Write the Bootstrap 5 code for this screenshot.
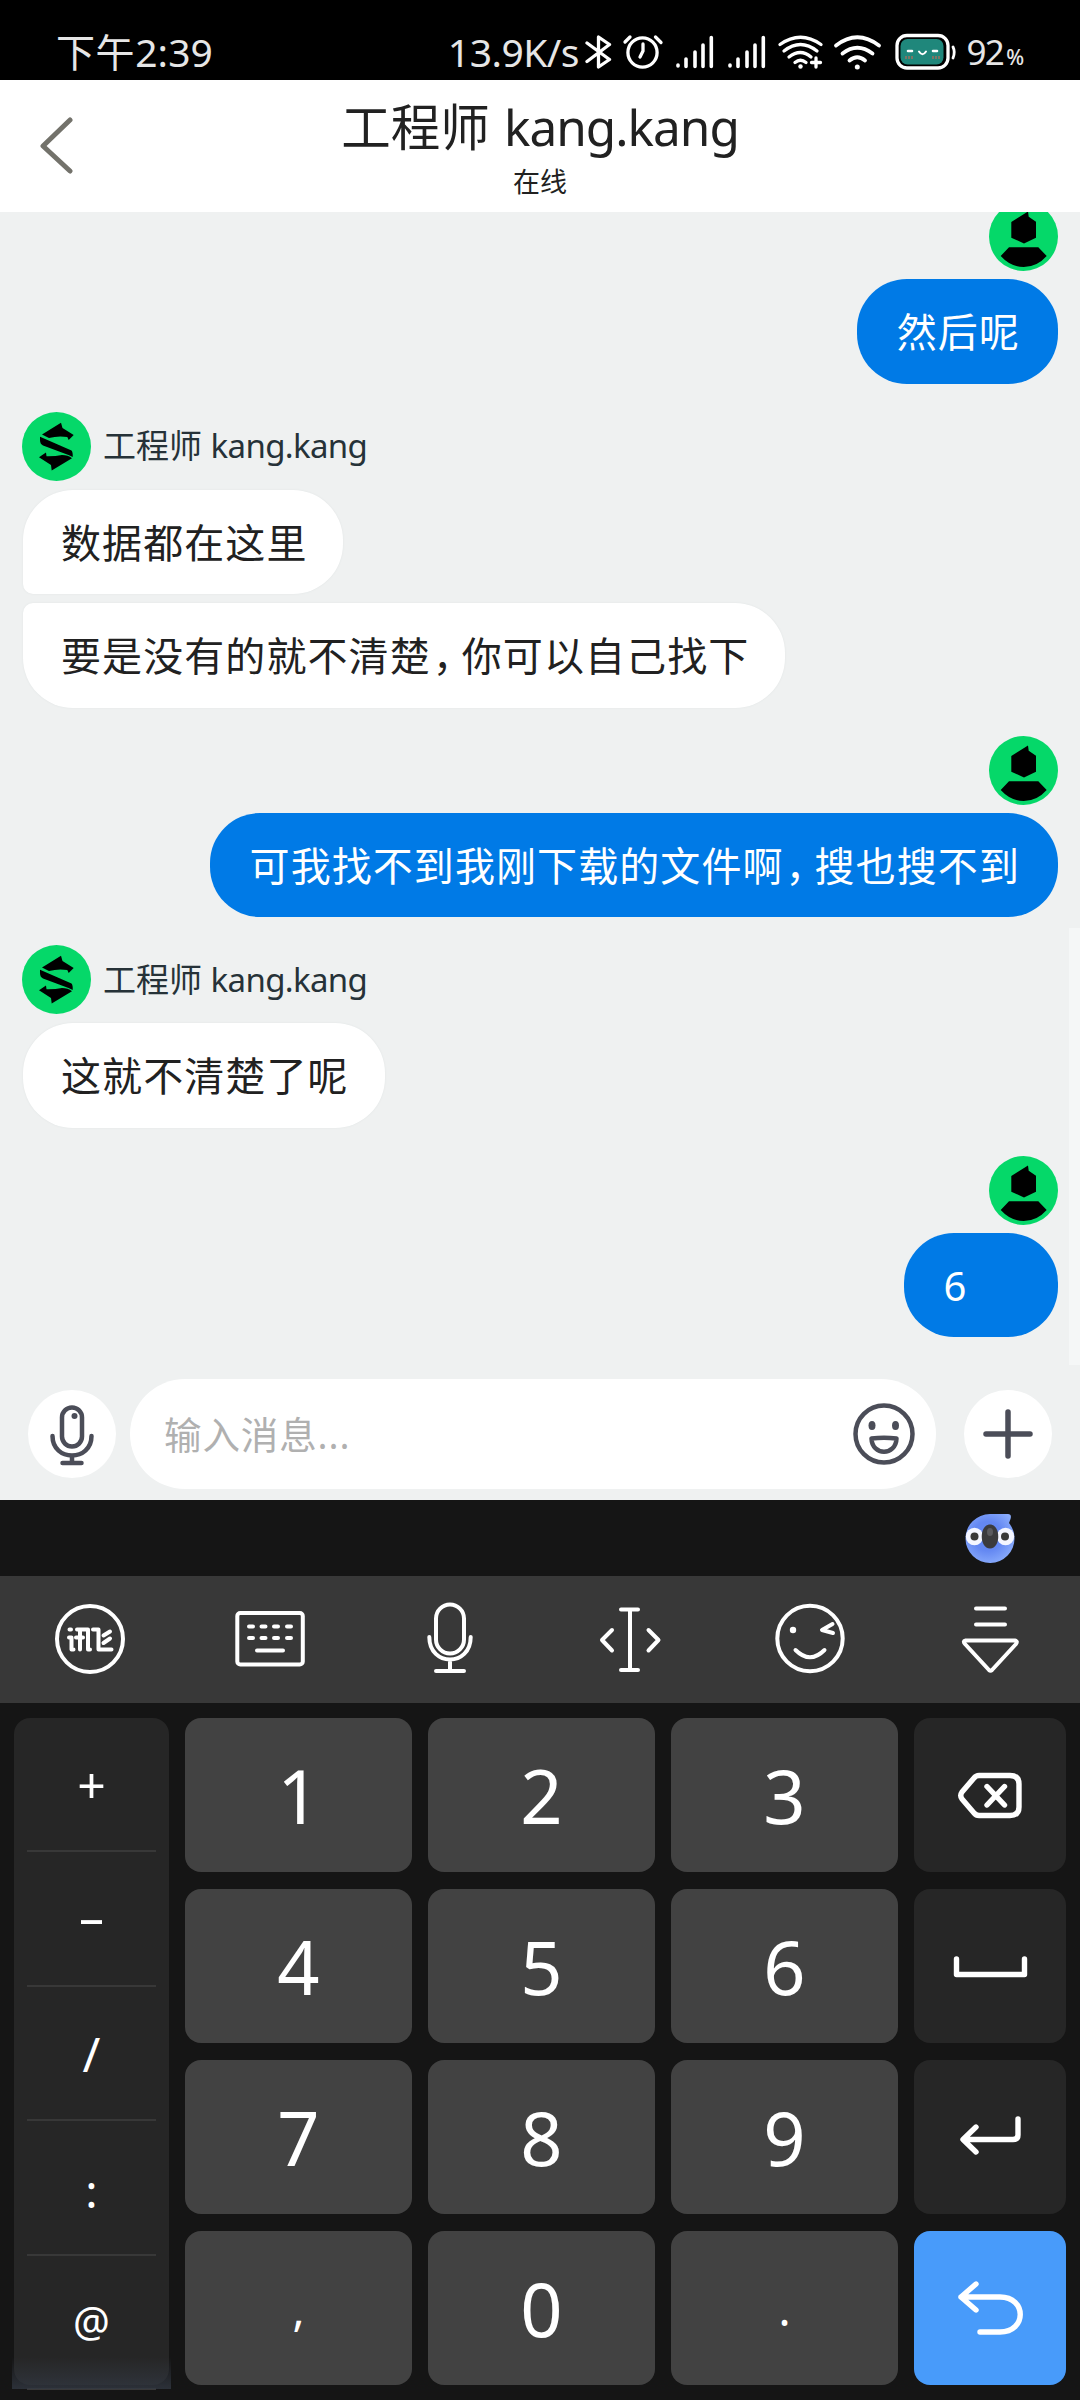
<!DOCTYPE html>
<html lang="zh-CN">
<head>
<meta charset="utf-8">
<meta name="viewport" content="width=device-width, initial-scale=1">
<title>工程师 kang.kang</title>
<link href="https://cdn.jsdelivr.net/npm/bootstrap@5.3.0/dist/css/bootstrap.min.css" rel="stylesheet">
<style>
body{width:1080px;height:2400px;overflow:hidden;font-family:"Noto Sans","Noto Sans CJK SC",sans-serif;color:#212121;background:#151515}
svg{display:block;flex:none}
.ln{fill:none;stroke:currentColor;stroke-linecap:round;stroke-linejoin:round}
.statusbar{height:80px;background:#000;color:#e6e6e6;padding:24px 54px 0 56px}
.statusbar .clock,.statusbar .rate{font-size:39px;line-height:56px;white-space:nowrap}
.clock{width:170px;letter-spacing:.1px}
.clock .cjk{letter-spacing:.6px}
.rate{letter-spacing:-.5px;width:138.5px;margin-left:223px}
.pct{font-size:35px;line-height:56px;letter-spacing:-1.6px;width:60px;white-space:nowrap}
.pct .unit{font-size:21px;font-weight:500;margin-left:3px}
.chat-head{height:132px;background:#fff;padding:0 40px}
.chat-head h1{font-size:49.5px;line-height:66px;margin:14px 0 0;font-weight:400;white-space:pre;word-spacing:1.5px}
.lat{letter-spacing:-.02em}
.chat-head p{font-size:27px;line-height:36px;margin:4px 0 0}
.chat-head .side{width:48px}
.chat-body{height:1288px;background:#eff1f1}
.thread{height:1167px;padding:0 22px;overflow:hidden}
.first{margin-top:-10px}
.turn{margin-bottom:28px}
.who{font-size:33px;color:#263238;margin-left:12px;line-height:60px;white-space:pre}
.bubble{height:104.5px;line-height:106px;font-size:40px;letter-spacing:1.08px;white-space:nowrap;border-radius:50px}
.bubble i{display:inline-block;width:31px;height:60px;line-height:60px;padding-left:2px;font-style:normal;font-feature-settings:"halt"}
.mine{background:#007ae6;color:#fff;margin-top:8px;padding:0 38px 0 39.5px}
.theirs{background:#fff;margin-top:9px;margin-left:1px;box-shadow:0 0 2px #dfe3e3;padding:0 36px 0 38px}
.tail-b{border-bottom-left-radius:10px}
.tail-t{border-top-left-radius:10px}
.short{width:154px}
.rail{width:11px;height:437px;top:716px;right:0;background:#f5f7f7}
.composer{padding:0 28px;height:110px}
.round-btn{width:88px;height:88px;background:#fff;color:#4b4d58;border:0;padding:0}
.field{width:806px;height:110px;background:#fff;border-radius:55px;padding:0 21px 0 34px;color:#b0b0b0;font-size:37.5px;letter-spacing:.9px;margin:0 28px 0 14px}
.field span{padding-top:2px}
.field svg{color:#4b4d58}
.suggest{height:76px;padding-right:65px}
.tools{height:127px;background:#383838;color:#fff;padding-top:1px}
.tools button,.pad button{border:0;padding:0;color:#fff}
.tools button{width:180px;height:124px;background:none}
.pad{padding:15px 14px 0 14px;gap:16px}
.syms{width:155px;height:667px;background:#262626;border-radius:16px}
.syms button{flex:none;height:134.5px;width:129px;background:none;border-bottom:2px solid #383838;font-size:41px;line-height:1}
.syms button:first-child{height:134px}
.syms button:last-child{border:0;height:129px}
.syms .op{font-size:50px}
.syms .minus{padding-bottom:5px}
.syms .slash{font-size:48px;padding-top:2px}
.syms .colon{font-size:46px;padding-top:6px}
.grid{display:grid;grid-template-columns:227px 227px 227px 151.5px;grid-auto-rows:154px;gap:17px 16px}
.key{background:#424242;border-radius:16px;font-size:74px;line-height:154px;display:flex;align-items:center;justify-content:center}
.key span{padding-top:2px}
.fn{background:#262626}
.key.go{background:#489bfa}
.key .pt{font-size:45px}
.glow{left:-2.5px;bottom:-4px;width:159px;height:32px;background:linear-gradient(#33394200,#323842cc)}
</style>
</head>
<body>
<svg width="0" height="0" class="position-absolute">
  <symbol id="av-me" viewBox="0 0 69 69"><circle cx="34.5" cy="34.5" r="34.5" fill="#05d869"/><path d="M39 9.5 39.7 14.7 47 19.7V35.7L35 41.5 22.3 35.7V20ZM20 45.3H49.3L57.7 54Q48 65 34.8 65T11.7 54Z"/></symbol>
  <symbol id="av-eng" viewBox="0 0 69 69"><circle cx="34.5" cy="34.5" r="34.5" fill="#05d869"/><path d="M39 10.7 40.5 16 51.7 23 46.7 28 45.3 25Q36 23.5 27 26L20 22.5ZM18 24.7 49.5 38.5Q51 40 50.7 45L46.5 43 21 33.5Q18 32 18 28ZM17 45.3 24 40.5 24.5 44.3Q33 44.5 40 43Q46 43 50 46.3L29.7 58.5 29 53Z"/></symbol>
</svg>

<header class="statusbar d-flex align-items-start">
  <div class="clock"><span class="cjk">下午</span>2:39</div>
  <div class="rate">13.9K/s</div>
  <svg width="381" height="56" viewBox="586 24 381 56" color="#fff">
    <g class="ln" stroke-width="3.3">
      <path d="M588 43 610.5 59.5 599.5 67V37L610.5 44.5 588 61.5"/>
      <circle cx="643.5" cy="52.5" r="14.6"/><path d="M626 42 631 37M656.500 37 662 42.500M644 44V51L641 57"/>
      <path stroke-width="3.6" d="M679 65v1M687 59v7.500M696 52v14.500M704 45v21.500M712.300 37.500v29M731 65v1M739 59v7.500M748 52v14.500M756 45v21.500M764.300 37.500v29"/>
      <path d="M781 44.500Q801.500 30 822 44.500M785 51Q801.500 38 818 51M790 57Q801.500 48 812 57M796 62.500Q801.500 58 807 62.500M817 58v9M812.500 62.500h9"/>
      <path stroke-width="3.8" d="M837 45.500Q858.300 29 880 45.500M843.500 53.500Q858.300 42 873.500 53.500M850.500 60.500Q858.300 54 866 60.500"/>
      <rect x="898" y="35.500" width="51" height="32.500" rx="10"/><path stroke-width="2.800" d="M954 47Q956.500 52 954 58"/>
    </g>
    <circle cx="801.500" cy="66.500" r="2.200" fill="#fff"/><circle cx="858.300" cy="67" r="2.500" fill="#fff"/>
    <rect x="901.500" y="39" width="43" height="25.500" rx="7" fill="#1f877b"/>
    <path class="ln" stroke-width="2.600" d="M909 51h4M934 51h4"/><path class="ln" stroke-width="2" d="M920 51.500Q923.500 57 927 51.500"/>
    <path stroke="#a0705f" stroke-width="1.500" d="M907 56v3M910 56v3M913 56v3M934 56v3M937 56v3M940 56v3"/>
  </svg>
  <div class="pct">92<span class="unit">%</span></div>
</header>

<div class="chat-head d-flex justify-content-between align-items-start">
  <svg class="side" width="48" height="132" viewBox="40 80 48 132" color="#73726b"><path class="ln" stroke-width="5" d="M70 120 43 146 70 171"/></svg>
  <div class="text-center"><h1>工程师 <span class="lat">kang.kang</span></h1><p>在线</p></div>
  <div class="side"></div>
</div>

<main class="chat-body position-relative">
  <div class="thread">
    <section class="turn first d-flex flex-column align-items-end">
      <svg width="69" height="69"><use href="#av-me"/></svg>
      <div class="bubble mine">然后呢</div>
    </section>
    <section class="turn d-flex flex-column align-items-start">
      <div class="d-flex align-items-center"><svg width="69" height="69"><use href="#av-eng"/></svg><span class="who">工程师 <span class="lat">kang.kang</span></span></div>
      <div class="bubble theirs tail-b">数据都在这里</div>
      <div class="bubble theirs tail-t">要是没有的就不清楚<i>，</i>你可以自己找下</div>
    </section>
    <section class="turn d-flex flex-column align-items-end">
      <svg width="69" height="69"><use href="#av-me"/></svg>
      <div class="bubble mine">可我找不到我刚下载的文件啊<i>，</i>搜也搜不到</div>
    </section>
    <section class="turn d-flex flex-column align-items-start">
      <div class="d-flex align-items-center"><svg width="69" height="69"><use href="#av-eng"/></svg><span class="who">工程师 <span class="lat">kang.kang</span></span></div>
      <div class="bubble theirs">这就不清楚了呢</div>
    </section>
    <section class="turn d-flex flex-column align-items-end">
      <svg width="69" height="69"><use href="#av-me"/></svg>
      <div class="bubble mine short">6</div>
    </section>
  </div>
  <div class="rail position-absolute"></div>
  <div class="composer d-flex align-items-center">
    <button class="round-btn rounded-circle"><svg width="88" height="88" viewBox="0 0 88 88"><g class="ln" stroke-width="4.500"><rect x="34" y="17.500" width="20" height="39" rx="10"/><path d="M24.500 46C24.500 72 63.500 72 63.500 46M44 66v6M34.500 73h19"/></g><circle cx="46.500" cy="26" r="3" fill="currentColor"/></svg></button>
    <div class="field d-flex align-items-center justify-content-between"><span>输入消息...</span>
      <svg width="62" height="62" viewBox="0 0 62 62"><g class="ln" stroke-width="4.500"><circle cx="31" cy="31" r="28.500"/><path d="M18.500 35.500Q31 34 43.500 35.500C43 53 19 53 18.500 35.500Z"/></g><ellipse cx="19" cy="22.500" rx="3.500" ry="4.500" fill="currentColor"/><ellipse cx="42.500" cy="22.500" rx="3.500" ry="4.500" fill="currentColor"/></svg>
    </div>
    <button class="round-btn rounded-circle"><svg width="88" height="88" viewBox="0 0 88 88"><path class="ln" stroke-width="5.500" d="M44 22V66M22 44H66"/></svg></button>
  </div>
</main>

<section class="keyboard">
  <div class="suggest d-flex justify-content-end align-items-center">
    <svg width="50" height="52" viewBox="0 0 50 52"><defs><radialGradient id="kb" cx=".45" cy=".45" r=".6"><stop offset=".5" stop-color="#6488f2"/><stop offset="1" stop-color="#8aacfc"/></radialGradient></defs>
      <path fill="url(#kb)" d="M25 2H43Q47 2 45.500 7L44 11Q49.500 18 49.500 26A24.500 24.500 0 1 1 25 2Z"/>
      <circle cx="9.500" cy="24.500" r="8.700" fill="#f4f6ff"/><circle cx="40.500" cy="24.500" r="8.700" fill="#f4f6ff"/><circle cx="9.500" cy="24.500" r="4" fill="#383838"/><circle cx="40" cy="24.500" r="4" fill="#383838"/>
      <path fill="#3b3b3d" d="M25 12.500C36 12.500 36 36.500 25 36.500S14 12.500 25 12.500Z"/><ellipse cx="25" cy="20" rx="3" ry="4" fill="#5b5b5e"/></svg>
  </div>
  <nav class="tools d-flex">
    <button><svg width="180" height="124" viewBox="0 1577 180 124"><g class="ln" stroke-width="4"><circle cx="90" cy="1639" r="33"/><path d="M69.500 1629.500h1.500M69 1637.500h2.500V1649.500h2M77 1629.500H88V1649.500h2M80 1629.500V1649.500M76 1637.500h7M93 1629.500H98.500V1649.500H111.500M103.500 1635.500 110 1631.500M103.500 1643 110 1638.500"/></g></svg></button>
    <button><svg width="180" height="124" viewBox="180 1577 180 124"><g class="ln" stroke-width="4"><rect x="237.300" y="1613" width="65.500" height="51.500" rx="3"/><path d="M249 1626.500h4M261.500 1626.500h4M274 1626.500h4M287 1626.500h4M249 1638h4M261.500 1638h4M274 1638h4M287 1638h4M257 1650.500h26"/></g></svg></button>
    <button><svg width="180" height="124" viewBox="360 1577 180 124"><g class="ln" stroke-width="4"><rect x="436" y="1604.500" width="28" height="49" rx="14"/><path d="M429.300 1637C429.300 1667 470.700 1667 470.700 1637M450 1660v11M436 1671h28"/></g></svg></button>
    <button><svg width="180" height="124" viewBox="540 1577 180 124"><path class="ln" stroke-width="4" d="M630 1609.500v60.500M621 1609.500h17M621 1670h17M612 1630 602 1640 612 1650.500M648.500 1630 658.500 1640 648.500 1650.500"/></svg></button>
    <button><svg width="180" height="124" viewBox="720 1577 180 124"><g class="ln" stroke-width="4"><circle cx="810" cy="1638.500" r="32.700"/><path d="M795.500 1650Q810 1664.500 824.500 1650M832.500 1624 822 1630 833 1633"/></g><circle cx="793" cy="1630" r="3.200" fill="#fff"/></svg></button>
    <button><svg width="180" height="124" viewBox="900 1577 180 124"><path class="ln" stroke-width="4" d="M976 1608.500h29M976 1624.500h29M965.500 1640.500H1015Q1018 1641 1016 1644L992 1670Q990.500 1671.500 989 1670L965 1644Q962.500 1641 965.500 1640.500Z"/></svg></button>
  </nav>
  <div class="pad d-flex">
    <div class="syms position-relative d-flex flex-column align-items-center">
      <button class="op">+</button><button class="op minus">–</button><button class="slash">/</button><button class="colon">:</button><button>@</button>
      <div class="glow position-absolute"></div>
    </div>
    <div class="grid">
      <button class="key"><span>1</span></button><button class="key"><span>2</span></button><button class="key"><span>3</span></button>
      <button class="key fn"><svg width="68" height="60" viewBox="0 0 68 60"><path class="ln" stroke-width="5.400" d="M23 10.500H54Q63 10.500 63 19V42Q63 50.500 54 50.500H23Q20 50.500 18 48L6 34Q3.500 30.500 6 27L18 13Q20 10.500 23 10.500ZM31 21.500 48.500 40M48.500 21.500 31 40"/></svg></button>
      <button class="key"><span>4</span></button><button class="key"><span>5</span></button><button class="key"><span>6</span></button>
      <button class="key fn"><svg width="78" height="40" viewBox="0 0 78 40"><path class="ln" stroke-width="5.400" d="M5.500 13V28.500H73.500V13"/></svg></button>
      <button class="key"><span>7</span></button><button class="key"><span>8</span></button><button class="key"><span>9</span></button>
      <button class="key fn"><svg width="68" height="50" viewBox="0 0 68 50"><path class="ln" stroke-width="5.400" d="M62 7V23Q62 27.500 57 27.500H8M20 15 7 27.500 20 40"/></svg></button>
      <button class="key"><span class="pt">,</span></button><button class="key"><span>0</span></button><button class="key"><span class="pt">.</span></button>
      <button class="key go"><svg width="74" height="64" viewBox="0 0 74 64"><path class="ln" stroke-width="5.400" d="M23 8 8 21 23 34M8 21H47C74 21 74 56 47 56H27"/></svg></button>
    </div>
  </div>
</section>
<script src="https://cdn.jsdelivr.net/npm/bootstrap@5.3.0/dist/js/bootstrap.bundle.min.js"></script>
</body>
</html>
